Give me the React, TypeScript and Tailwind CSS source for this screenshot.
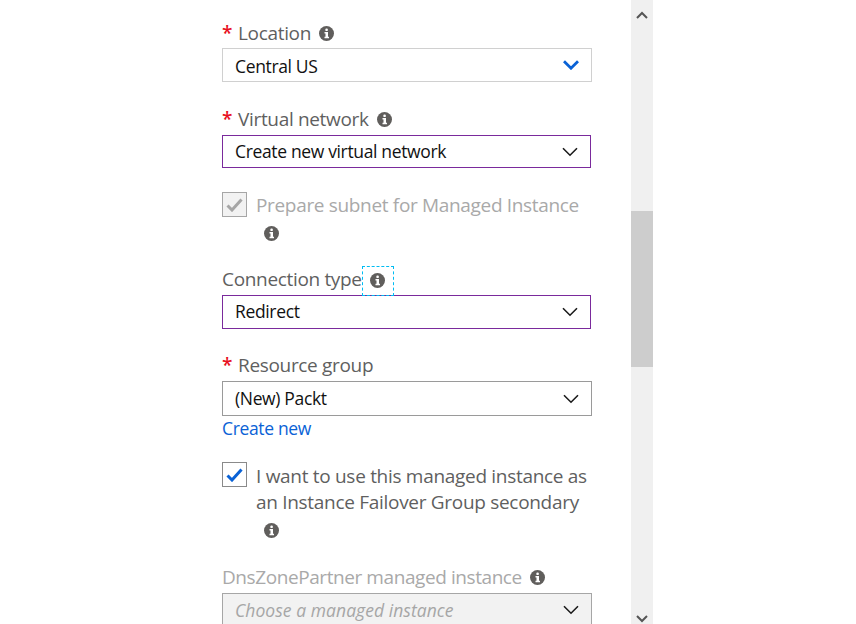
import React from "react";

const font = { fontFamily: '"Open Sans", "Noto Sans", sans-serif' };

function Info({ className = "" }: { className?: string }) {
  return (
    <svg width="15" height="15" viewBox="0 0 15 15" className={"shrink-0 " + className}>
      <circle cx="7.5" cy="7.5" r="7.5" fill="#605e5c" />
      <rect x="6.3" y="2.5" width="2.6" height="2.6" rx="1.2" fill="#fff" />
      <path d="M5.5 6.1h3.5v4.7h1v1.5H5.5v-1.5h1v-3.2h-1z" fill="#fff" />
    </svg>
  );
}

function Chevron({ blue = false }: { blue?: boolean }) {
  return (
    <svg width="16" height="10" viewBox="0 0 16 10" className="shrink-0" fill="none">
      <path
        d="M1 1.2 L8 8.2 L15 1.2"
        stroke={blue ? "#0a62d6" : "#1a1a1a"}
        strokeWidth={blue ? 2.8 : 1.6}
      />
    </svg>
  );
}

function Star() {
  return <span className="text-[#e81123] w-[16px] shrink-0 font-semibold">*</span>;
}

function Label({ text, star, muted }: { text: string; star?: boolean; muted?: boolean }) {
  return (
    <div className={"flex items-center h-[24px] text-[19px] " + (muted ? "text-[#a9a9a9] tracking-[-0.42px]" : "text-[#5f5f5f] tracking-[-0.33px]")}>
      {star && <Star />}
      <span>{text}</span>
      <Info className="ml-[8px] mt-[1px]" />
    </div>
  );
}

function Select({ value, border, width = "w-[370px]", blue, h, muted, textClass = "" }: { value: string; border: string; width?: string; blue?: boolean; h: string; muted?: boolean; textClass?: string }) {
  return (
    <div
      className={`flex items-center justify-between pl-[12px] pr-[12px] border text-[17.5px] ${border} ${width} ${h} ${
        muted ? "bg-[#f2f2f2] text-[#a6a6a6] italic tracking-[0.05px]" : "bg-white text-[#111] tracking-[-0.35px]"
      }`}
    >
      <span className={textClass}>{value}</span>
      <Chevron blue={blue} />
    </div>
  );
}

function Check({ disabled }: { disabled?: boolean }) {
  return (
    <div
      className={`w-[25px] h-[25px] border flex items-center justify-center shrink-0 ${
        disabled ? "bg-[#f2f2f2] border-[#a6a6a6]" : "bg-white border-[#8a8a8a]"
      }`}
    >
      <svg width="17" height="14" viewBox="0 0 17 14" fill="none">
        <path d="M1.5 7.5 L6 12 L15.5 1.5" stroke={disabled ? "#a6a6a6" : "#0a62d6"} strokeWidth="3" />
      </svg>
    </div>
  );
}

export default function App() {
  return (
    <div className="w-[856px] h-[624px] overflow-hidden bg-white flex" style={font}>
      <div className="w-[409px] ml-[222px] shrink-0 flex flex-col pt-[21px]">
        <Label text="Location" star />
        <div className="mt-[3px]">
          <Select value="Central US" border="border-[#d0d0d0]" blue h="h-[34px]" textClass="pt-[2px]" />
        </div>

        <div className="mt-[25px]">
          <Label text="Virtual network" star />
        </div>
        <div className="mt-[4px]">
          <Select value="Create new virtual network" border="border-[#7a2a9c]" width="w-[369px]" h="h-[33px]" />
        </div>

        <div className="mt-[24px] flex gap-[9px]">
          <Check disabled />
          <div className="text-[19px] tracking-[-0.33px] text-[#a9a9a9] leading-[26px]">Prepare subnet for Managed Instance</div>
        </div>
        <div className="mt-[8px] ml-[42px] h-[15px] flex">
          <Info />
        </div>

        <div className="mt-[26px] relative">
          <div className="flex items-center h-[24px] text-[19px] tracking-[-0.33px] text-[#5f5f5f]">
            <span>Connection type</span>
            <Info className="ml-[8px] mt-[2px]" />
          </div>
          <div className="absolute left-[140px] top-[-1px] w-[32px] h-[30px] border border-dashed border-[#00bcf2]" />
        </div>
        <div className="mt-[4px]">
          <Select value="Redirect" border="border-[#7a2a9c]" width="w-[369px]" h="h-[34px]" textClass="pb-[2px]" />
        </div>

        <div className="mt-[24px]">
          <div className="flex items-center h-[24px] text-[19px] tracking-[-0.33px] text-[#5f5f5f]">
            <Star />
            <span>Resource group</span>
          </div>
        </div>
        <div className="mt-[4px]">
          <Select value="(New) Packt" border="border-[#9a9a9a]" h="h-[35px]" />
        </div>
        <div className="h-[24px] flex items-center text-[17.5px] tracking-[-0.35px] text-[#0a62d6]">Create new</div>

        <div className="mt-[22px] flex gap-[9px]">
          <Check />
          <div className="pt-[1px] text-[19px] tracking-[-0.3px] text-[#5f5f5f] leading-[26px] w-[340px]">
            I want to use this managed instance as an Instance Failover Group secondary
          </div>
        </div>
        <div className="mt-[8px] ml-[42px] h-[15px] flex">
          <Info />
        </div>

        <div className="mt-[27px]">
          <Label text="DnsZonePartner managed instance" muted />
        </div>
        <div className="mt-[4px]">
          <Select value="Choose a managed instance" border="border-[#a6a6a6]" h="h-[34px]" muted />
        </div>
      </div>

      <div className="w-[22px] h-[624px] bg-[#f0f0f0] flex flex-col items-center shrink-0 relative">
        <svg width="12" height="8" viewBox="0 0 12 8" fill="none" className="absolute top-[11px] left-[5px]">
          <path d="M1 7 L6 2 L11 7" stroke="#555" strokeWidth="2" />
        </svg>
        <div className="w-full h-[156px] bg-[#cdcdcd] mt-[211px]" />
        <svg width="12" height="8" viewBox="0 0 12 8" fill="none" className="absolute bottom-[1px] left-[5px]">
          <path d="M1 1 L6 6 L11 1" stroke="#555" strokeWidth="2" />
        </svg>
      </div>
    </div>
  );
}
